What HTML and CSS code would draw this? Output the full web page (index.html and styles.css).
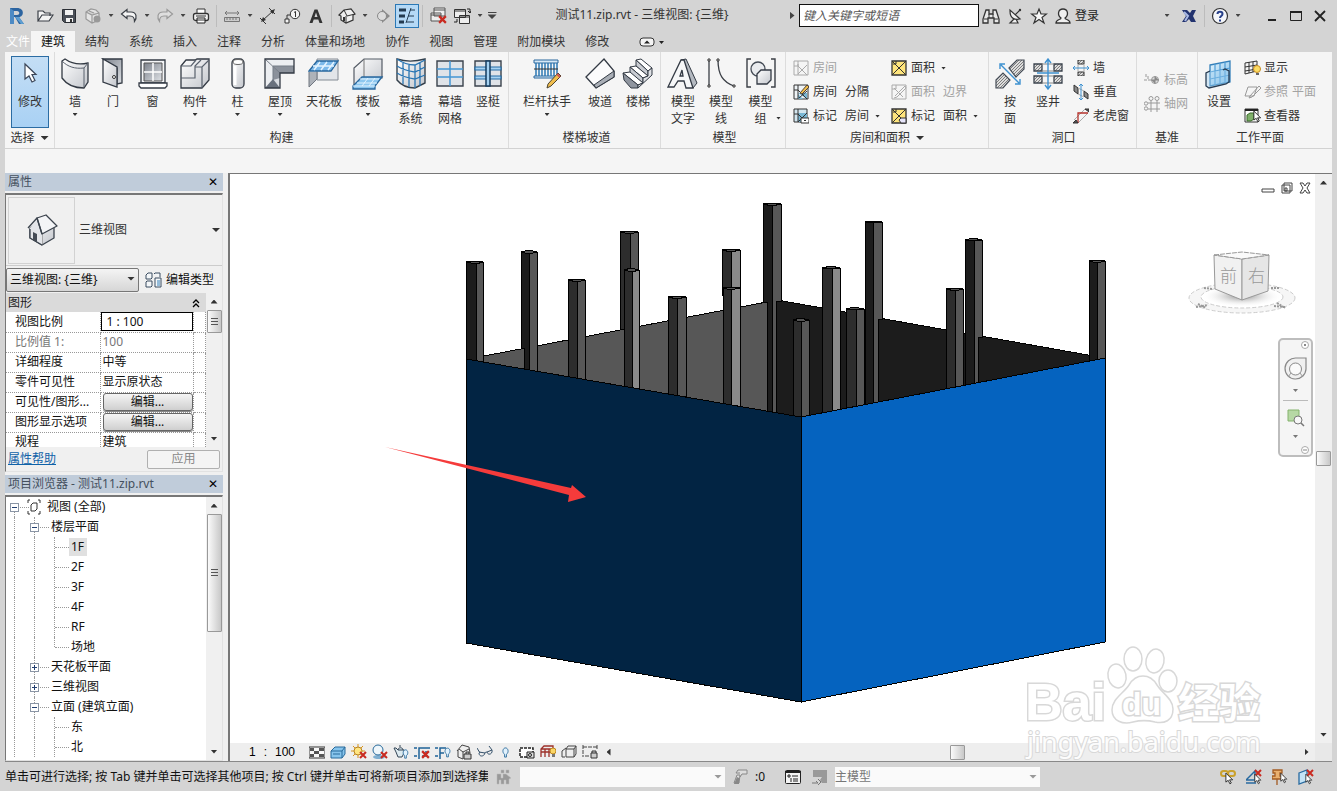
FILE: index.html
```html
<!DOCTYPE html>
<html lang="zh-CN">
<head>
<meta charset="utf-8">
<title>测试11.zip.rvt - 三维视图: {三维}</title>
<link rel="stylesheet" href="styles.css">
</head>
<body>
<svg class="defs" width="0" height="0" aria-hidden="true">
  <defs>
    <linearGradient id="steel" x1="0" y1="0" x2="1" y2="1"><stop offset="0" stop-color="#fff"/><stop offset="1" stop-color="#c3c6cc"/></linearGradient>
    <linearGradient id="dark" x1="0" y1="0" x2="1" y2="1"><stop offset="0" stop-color="#7c828c"/><stop offset="1" stop-color="#dfe2e6"/></linearGradient>
    <linearGradient id="sky" x1="0" y1="0" x2="1" y2="1"><stop offset="0" stop-color="#e4f3fc"/><stop offset="1" stop-color="#7fbfe9"/></linearGradient>
    <radialGradient id="shade"><stop offset="0" stop-color="#888"/><stop offset="1" stop-color="#fff" stop-opacity="0"/></radialGradient>
    <pattern id="hatch" width="3" height="3" patternUnits="userSpaceOnUse"><rect width="3" height="3" fill="#ddd"/><path d="M0 3L3 0" stroke="#666" stroke-width=".8"/></pattern>
    <symbol id="redx" viewBox="0 0 8 8"><path d="M1 1l6 6M7 1L1 7" stroke="#c92a20" stroke-width="2"/></symbol>
    <symbol id="cursor" viewBox="0 0 10 14"><path d="M1 1v10l2.500-2 2 4 1.500-1-2-3.500h3.500z" fill="#fff" stroke="#222"/></symbol>
    <symbol id="bulb" viewBox="0 0 8 12"><path d="M3 8C0 6 1 1 4 1s4 5 1 7v3H3z" fill="#e2f2fd" stroke="#286a9b"/></symbol>
  </defs>
</svg>

<header class="titlebar">
  <div class="quick">
    <button class="ib" aria-label="Revit"><svg width="20" height="20" viewBox="0 0 20 20"><path d="M3 2h7c8 0 7 9 2 9l5 7h-5L8 11H7v7H3z" fill="#2c64a0"/><path d="M7 5h3c3 0 3 4 0 4H7z" fill="#d4d4d4"/><path d="M3 2l4 3v13H3z" fill="#4d8ac4"/><path d="M8 11l4 0 5 7h-3z" fill="#5d9ed2"/></svg></button>
    <span class="gap4"></span>
    <button class="ib" aria-label="打开"><svg width="18" height="16" viewBox="0 0 18 16"><path d="M2 13V3h5l2 2h5v3M2 13l4-6h11l-4 6z" fill="#f4f4f4" stroke="#3a3f46" stroke-width="1.200"/></svg></button>
    <button class="ib" aria-label="保存"><svg width="16" height="16" viewBox="0 0 16 16"><path d="M1.500 1.500h13v13h-11l-2-2z" fill="#4a4f57" stroke="#2a2e34"/><path d="M4 2h8v5H4z" fill="#f2f2f2"/><path d="M5 10h7v4H5z" fill="#f2f2f2"/><path d="M9 11h2v3H9z" fill="#333"/></svg></button>
    <button class="ib" aria-label="同步"><svg width="18" height="16" viewBox="0 0 18 16"><path d="M2 4l5-3 5 1 3 3v7l-7 3-6-4zM2 4l6 3 7-2M8 7v8M5 3l5 2" fill="#e4e4e4" stroke="#999" stroke-width="1.200"/><circle cx="13" cy="11" r="3.500" fill="#999"/></svg></button>
    <button class="ab" aria-label="同步选项"></button>
    <button class="ib" aria-label="撤销"><svg width="18" height="16" viewBox="0 0 18 16"><path d="M1.500 6L7 1.500V4h4c6 0 6 6 3.500 9.500C14.500 9 13 8 10 8H7v2.500z" fill="#f4f4f4" stroke="#3a3f46" stroke-width="1.200"/></svg></button>
    <button class="ab" aria-label="撤销列表"></button>
    <button class="ib" aria-label="重做"><svg width="18" height="16" viewBox="0 0 18 16"><path d="M16.500 6L11 1.500V4H7C1 4 1 10 3.500 13.500 3.500 9 5 8 8 8h3v2.500z" fill="#dedede" stroke="#999" stroke-width="1.200"/></svg></button>
    <button class="ab" aria-label="重做列表"></button>
    <button class="ib" aria-label="打印"><svg width="18" height="16" viewBox="0 0 18 16"><path d="M5 6V1h8v5" fill="#fff" stroke="#333"/><rect x="1.500" y="5.500" width="15" height="7" rx="2" fill="#f2f2f2" stroke="#333" stroke-width="1.300"/><path d="M5 10h8v5H5z" fill="#fff" stroke="#222"/><path d="M4 8h10M5 12h8" stroke="#333"/></svg></button>
    <span class="vsep"></span>
    <button class="ib" aria-label="测量"><svg width="18" height="14" viewBox="0 0 18 14"><path d="M2 4h14M4 2L2 4l2 2M14 2l2 2-2 2" stroke="#777" fill="none"/><path d="M1.500 8.500h15v4h-15z" fill="#ccc" stroke="#777"/><path d="M4 9v2M7 9v2M10 9v2M13 9v2" stroke="#777"/></svg></button>
    <button class="ab" aria-label="测量选项"></button>
    <button class="ib" aria-label="对齐尺寸标注"><svg width="18" height="18" viewBox="0 0 18 18"><path d="M4 13L14 4M1 11l6 6M10 1l6 6" stroke="#333" fill="none"/><path d="M2 15l2-5 3 3zM16 2l-5 2 3 3z" fill="#333"/></svg></button>
    <button class="ib" aria-label="按类别标记"><svg width="18" height="16" viewBox="0 0 18 16"><circle cx="12" cy="6" r="4.700" fill="#f4f4f4" stroke="#333"/><path d="M11 4.500l1.500-1V9M7 7H4v5" stroke="#333" fill="none"/><path d="M2 11h4v4H2z" fill="#f4f4f4" stroke="#333"/></svg></button>
    <button class="ib" aria-label="文字"><svg width="16" height="16" viewBox="0 0 16 16"><path d="M1.500 15L6.500 1.500h3L14.500 15h-3l-1.200-3.500H5.700L4.500 15zM6.500 9h3L8 4.500z" fill="#333" fill-rule="evenodd"/></svg></button>
    <span class="vsep"></span>
    <button class="ib" aria-label="默认三维视图"><svg width="18" height="16" viewBox="0 0 18 16"><path d="M1 7l5-5 7-1 4 5-2 1v5l-7 3-5-3V8z" fill="#f0f0f0" stroke="#333" stroke-width="1.200"/><path d="M6 2l3 6 8-2M8 8v7" fill="none" stroke="#333"/><path d="M5 9h2v4H5z" fill="#333"/></svg></button>
    <button class="ab" aria-label="三维视图选项"></button>
    <button class="ib" aria-label="剖面"><svg width="14" height="16" viewBox="0 0 14 16"><path d="M6 1l8 7-8 7z" fill="#8b8b8b"/><circle cx="6" cy="8" r="4.500" fill="#dcdcdc" stroke="#888"/></svg></button>
    <button class="ib on" aria-label="细线" aria-pressed="true"><svg width="20" height="18" viewBox="0 0 20 18"><path d="M2 3h7M3 3h5" stroke="#233a50" stroke-width="3"/><path d="M2 9h6" stroke="#233a50" stroke-width="3"/><path d="M2 15h5" stroke="#233a50" stroke-width="3"/><path d="M13 3h5M11 9h6M10 15h7M14 1L9 16" stroke="#233a50"/></svg></button>
    <span class="vsep"></span>
    <button class="ib" aria-label="关闭隐藏窗口"><svg width="18" height="18" viewBox="0 0 18 18"><path d="M5 1h11v8H5zM2 6h10v8H2zM2 8h10M5 3h11" fill="#eee" stroke="#555"/><use href="#redx" x="9" y="8" width="9" height="9"/></svg></button>
    <button class="ib" aria-label="切换窗口"><svg width="18" height="18" viewBox="0 0 18 18"><path d="M1.500 2.500h11v8h-11zM1 4h11M6.500 8.500h10v8h-10zM7 10h9" fill="#eee" stroke="#333"/><path d="M14 2h3v4M15 4l2 2 1-2M4 12v3h-3" fill="none" stroke="#222"/></svg></button>
    <button class="ab" aria-label="窗口列表"></button>
    <button class="ab custom" aria-label="自定义快速访问工具栏"></button>
  </div>
  <h1 class="doc">测试11.zip.rvt - 三维视图: {三维}</h1>
  <button class="ab right" aria-label="展开搜索"></button>
  <input class="search" type="text" placeholder="键入关键字或短语" aria-label="搜索">
  <button class="ib" aria-label="查找"><svg width="18" height="18" viewBox="0 0 18 18"><path d="M4 3h3v4h4V3h3l3 9v4h-5v-5H6v5H1v-4z" fill="#e8e8e8" stroke="#333" stroke-width="1.300"/><path d="M2 12h4M12 12h4M7 7v4M11 7v4" stroke="#333" fill="none"/></svg></button>
  <button class="ib" aria-label="通讯中心"><svg width="16" height="18" viewBox="0 0 16 18"><path d="M3 4c0 8 5 9 10 8L3 3zM8 8l5-5M7 12l-4 4h8l-2-4" fill="#f0f0f0" stroke="#333" stroke-width="1.200"/><circle cx="13" cy="3" r="1.200" fill="#333"/></svg></button>
  <button class="ib" aria-label="收藏夹"><svg width="18" height="18" viewBox="0 0 18 18"><path d="M9 2l2 5h5.500L12 10.500l2 5.500-5-3.500L4 16l2-5.500L1.500 7H7z" fill="#f8f8f8" stroke="#333" stroke-width="1.200"/></svg></button>
  <button class="login"><svg width="18" height="18" viewBox="0 0 18 18"><path d="M2 16c0-4 5-3 5-5-4-3-3-9 2-9s6 6 2 9c0 2 5 1 5 5z" fill="#f0f0f0" stroke="#333" stroke-width="1.300"/></svg>登录</button>
  <button class="ab account" aria-label="账户菜单"></button>
  <button class="ib" aria-label="Exchange"><svg width="16" height="16" viewBox="0 0 16 16"><path d="M1 2h5l3 3 2-3h4l-3 6 3 6h-5l-2-3-3 3H1l4-6z" fill="#23336f"/><path d="M3 4l4 4-3 5" stroke="#a9b9e4" stroke-width="2" fill="none"/></svg></button>
  <span class="vsep"></span>
  <button class="ib" aria-label="帮助"><svg width="18" height="18" viewBox="0 0 18 18"><circle cx="9" cy="9" r="7.500" fill="#f4f6fa" stroke="#333" stroke-width="1.200"/><path d="M6.500 7c0-3 5-3 5 0 0 2-2.500 2-2.500 4M9 12.500v2" stroke="#27408a" stroke-width="2" fill="none"/></svg></button>
  <button class="ab" aria-label="帮助菜单"></button>
  <div class="winbtns">
    <button class="ib" aria-label="最小化"><svg width="14" height="14" viewBox="0 0 14 14"><path d="M3 11h8" stroke="#222" stroke-width="2"/></svg></button>
    <button class="ib" aria-label="最大化"><svg width="14" height="14" viewBox="0 0 14 14"><path d="M1.500 2.500h11v9h-11z" stroke="#222" fill="none"/><path d="M1 3h12" stroke="#222" stroke-width="2"/></svg></button>
    <button class="ib" aria-label="关闭"><svg width="14" height="14" viewBox="0 0 14 14"><path d="M2 2l10 10M12 2L2 12" stroke="#222" stroke-width="1.800"/></svg></button>
  </div>
</header>

<nav class="tabs">
  <button class="file">文件</button><button class="active">建筑</button><button>结构</button><button>系统</button><button>插入</button><button>注释</button><button>分析</button><button>体量和场地</button><button>协作</button><button>视图</button><button>管理</button><button>附加模块</button><button>修改</button>
  <button class="mini" aria-label="最小化功能区"><svg width="26" height="10" viewBox="0 0 26 10"><rect x="1" y="1" width="14" height="8" rx="3" fill="#f4f4f4" stroke="#333"/><path d="M5 6.500L8 3.500l3 3zM20 4h5l-2.500 3z" fill="#222"/></svg></button>
</nav>

<section class="ribbon">
  <div class="grp g-select">
    <div class="tools">
      <button class="tool sel"><svg width="32" height="32" viewBox="0 0 32 32"><path d="M11 6v15l4-3 3 6 3-1.500-3-6h4z" fill="#fff" stroke="#3b4658" stroke-width="1.200"/></svg><span>修改</span></button>
    </div>
    <h2>选择 <i class="tri"></i></h2>
  </div>

  <div class="grp g-build">
    <div class="tools">
      <button class="tool s"><svg width="32" height="32" viewBox="0 0 32 32"><path d="M3 3l3-2c7 5 14 6 23 4v19l-4 6C15 30 8 27 3 20z" fill="url(#steel)" stroke="#333a44" stroke-width="1.300"/><path d="M3 3c6 6 13 8 22 7l4-5M25 10v19" fill="none" stroke="#59616d"/></svg><span>墙</span><i class="tri"></i></button>
      <button class="tool s"><svg width="32" height="32" viewBox="0 0 32 32"><path d="M6 1h19v24l-5 1V10z" fill="url(#dark)" stroke="#333a44" stroke-width="1.300"/><path d="M6 1l14 8v20L6 24z" fill="url(#steel)" stroke="#333a44" stroke-width="1.300"/><circle cx="17" cy="19" r="1.500" fill="#fff" stroke="#333"/></svg><span>门</span></button>
      <button class="tool m"><svg width="32" height="32" viewBox="0 0 32 32"><path d="M4 2h24v23H4z" fill="#f4f5f7" stroke="#333a44" stroke-width="1.300"/><path d="M7 5h18v18H7z" fill="url(#dark)" stroke="#555"/><path d="M16 5v18M7 14h18" stroke="#fff" stroke-width="1.500"/><path d="M2 25h28v3l-2 2H4l-2-2z" fill="#fff" stroke="#333a44" stroke-width="1.300"/></svg><span>窗</span></button>
      <button class="tool l"><svg width="32" height="32" viewBox="0 0 32 32"><path d="M2 8l5-6h9l2-1h12v21l-7 8H2z" fill="url(#steel)" stroke="#333a44" stroke-width="1.300"/><path d="M2 20h14V8l6-6M2 8h10l5-6M16 9h7l7-7M23 9v21" fill="none" stroke="#59616d" stroke-width="1.200"/></svg><span>构件</span><i class="tri"></i></button>
      <button class="tool m"><svg width="32" height="32" viewBox="0 0 32 32"><rect x="10" y="1" width="12" height="29" rx="4" fill="url(#steel)" stroke="#333a44" stroke-width="1.300"/><ellipse cx="16" cy="4" rx="5" ry="2.500" fill="#fff" stroke="#666"/><path d="M13 8v19" stroke="#fff" stroke-width="3"/></svg><span>柱</span><i class="tri"></i></button>
      <button class="tool l"><svg width="32" height="32" viewBox="0 0 32 32"><path d="M1 1h29v14H16v15H1z" fill="#d9dce1"/><path d="M1 1l8 7v14l-8 8zM1 1h29v7H9z" fill="#eceef1"/><path d="M9 8h21v7H16v5l-7 2z" fill="#8b919b"/><path d="M1 30l8-9 7 9z" fill="#69717d"/><path d="M1 1l15 14M9 8v14M9 8h21" stroke="#777e88" fill="none"/><path d="M1 1h29v14H16v15H1z" fill="none" stroke="#333a44" stroke-width="1.300"/></svg><span>屋顶</span><i class="tri"></i></button>
      <button class="tool l"><svg width="32" height="32" viewBox="0 0 32 32"><path d="M1 13h29v9H9l-8 8z" fill="#eceef1"/><path d="M9 1h21v21H9z" fill="#e2e5e9" stroke="#848b94"/><path d="M1 13l8-10h21l-7 10z" fill="#7cb9ea" stroke="#28679d" stroke-width="1.300"/><path d="M12 4l-6 8M19 4l-6 8M26 4l-6 8M5 8h21" stroke="#e4f4ff" stroke-width="1.500"/><path d="M1 14v15l8-8v-7" fill="#adb2b9" stroke="#717780"/></svg><span>天花板</span></button>
      <button class="tool l"><svg width="32" height="32" viewBox="0 0 32 32"><path d="M2 10l10-9h18v19H10l-8 8z" fill="url(#steel)" stroke="#555c66" stroke-width="1.200"/><path d="M12 1v18" stroke="#777"/><path d="M1 28l9-9h20l-7 9v3H1z" fill="#8dc7ef" stroke="#28679d" stroke-width="1.300"/><path d="M8 21h19M5 25h20M16 20l-6 8M23 20l-6 8M1 28h22" stroke="#e4f4ff"/></svg><span>楼板</span><i class="tri"></i></button>
      <button class="tool m"><svg width="32" height="32" viewBox="0 0 32 32"><path d="M2 1c9 3 17 3 28 0v24l-10 5C12 30 6 27 2 22z" fill="url(#steel)" stroke="#34404c" stroke-width="1.400"/><path d="M2 1c7 5 12 6 18 6l10-5M20 7v23M8 5v21M14 7v22M25 5v23M2 8c8 5 12 5 18 6l10-5M2 15c8 5 12 5 18 6l10-4" fill="none" stroke="#2875b3" stroke-width="1.300"/></svg><span>幕墙<br>系统</span></button>
      <button class="tool s"><svg width="32" height="32" viewBox="0 0 32 32"><path d="M3 3h26v25H3z" fill="#dfe3e8" stroke="#3b434d" stroke-width="1.400"/><path d="M3 11h26M3 19h26M16 3v25" stroke="#4496d4" stroke-width="1.500"/></svg><span>幕墙<br>网格</span></button>
      <button class="tool s"><svg width="32" height="32" viewBox="0 0 32 32"><path d="M3 3h26v25H3z" fill="#dfe3e8" stroke="#3b434d" stroke-width="1.400"/><path d="M3 9h26v3H3zM3 18h26v3H3z" fill="#a6d2f2" stroke="#246ca5" stroke-width="1.200"/><path d="M14 3h4v25h-4z" fill="#a6d2f2" stroke="#153c5f" stroke-width="1.500"/></svg><span>竖梃</span></button>
    </div>
    <h2>构建</h2>
  </div>

  <div class="grp g-stair">
    <div class="tools">
      <button class="tool xl"><svg width="32" height="32" viewBox="0 0 32 32"><path d="M3 2h24v3H3zM3 18h24v2H3z" fill="#d7e9f7" stroke="#28679d"/><path d="M5 5v13M8 5v13M11 5v13M14 5v13M17 5v13M20 5v13M23 5v13M26 5v13" stroke="#2c78b4" stroke-width="1.500"/><path d="M3 11h24" stroke="#333"/><path d="M17 26L27 15l3 3-10 10-4 2z" fill="#f0bd4c" stroke="#4c4430"/><path d="M26 16l3 3" stroke="#c55" stroke-width="2"/></svg><span>栏杆扶手</span><i class="tri"></i></button>
      <button class="tool s"><svg width="32" height="32" viewBox="0 0 32 32"><path d="M2 19L20 1l10 12v6L12 30z" fill="#fbfbfc" stroke="#333a44" stroke-width="1.300"/><path d="M12 30l-2-3 20-14v6z" fill="#a9aeb6" stroke="#333a44"/></svg><span>坡道</span></button>
      <button class="tool s"><svg width="32" height="32" viewBox="0 0 32 32"><g stroke="#333a44" stroke-linejoin="round"><path d="M14 2l5-1 11 9-4 3z" fill="#fff"/><path d="M14 2l12 11v5L14 8z" fill="#c9ccd2"/><path d="M8 9l6-1 12 10-5 2z" fill="#fff"/><path d="M8 9l13 11v5L8 15z" fill="#c9ccd2"/><path d="M1 15l7-1 13 11-5 2z" fill="#fff"/><path d="M1 15l15 12v3H9l-7-8z" fill="#8f959f"/><path d="M16 30l14-13v-7l-4 3v5l-5 2v5l-5 2z" fill="#dfe1e5"/></g></svg><span>楼梯</span></button>
    </div>
    <h2>楼梯坡道</h2>
  </div>

  <div class="grp g-model">
    <div class="tools">
      <button class="tool s"><svg width="32" height="32" viewBox="0 0 32 32"><path d="M14 2l5-1 11 24-4 5z" fill="#b4b9c0" stroke="#333a44"/><path d="M1 29L14 2h3l9 28h-7l-2-7h-6l-4 6zM13 18h3l-1-6z" fill="#f6f7f8" fill-rule="evenodd" stroke="#333a44" stroke-width="1.300"/></svg><span>模型<br>文字</span></button>
      <button class="tool s"><svg width="32" height="32" viewBox="0 0 32 32"><path d="M4 2v26M13 2c0 15 5 22 16 26" fill="none" stroke="#3b3f46" stroke-width="1.300"/><path d="M3 1h2v2H3zM3 27h2v2H3zM12 1h2v2h-2zM28 27h2v2h-2z" fill="#fff" stroke="#333"/></svg><span>模型<br>线</span></button>
      <button class="tool m side"><svg width="32" height="32" viewBox="0 0 32 32"><path d="M6 1H2v28h4M26 1h4v28h-4" fill="none" stroke="#3b3f46" stroke-width="1.400"/><circle cx="13" cy="11" r="7" fill="#e9ebee" stroke="#444b55" stroke-width="1.300"/><path d="M12 16l4-4h10v10l-4 4H12z" fill="url(#steel)" stroke="#333a44" stroke-width="1.300"/></svg><span>模型<br>组</span><i class="tri"></i></button>
    </div>
    <h2>模型</h2>
  </div>

  <div class="grp g-room">
    <div class="tools">
      <div class="stack">
        <button disabled><svg width="16" height="16" viewBox="0 0 16 16"><path d="M1 1h14v14H1zM1 6h4V1M5 6l9 9M14 5l-9 9M5 4v11" fill="none" stroke="#aaa"/></svg><span>房间</span></button>
        <button><svg width="16" height="16" viewBox="0 0 16 16"><path d="M1 1h14v14H1z" fill="#eef3f6" stroke="#333"/><path d="M5 10l5 5H5zM5 9h9v6" fill="#79b7d4"/><path d="M1 6h4V1M5 6v9M6 14l8-7M5 6l9 9" stroke="#333" fill="none"/><path d="M7 9l7-8 2 2-7 7z" fill="#f0bd4c" stroke="#543"/></svg><span>房间</span><span>分隔</span></button>
        <button><svg width="16" height="16" viewBox="0 0 16 16"><path d="M1 1h13v13H1z" fill="#d3e6ef" stroke="#333"/><path d="M5 5h9v9H5z" fill="#79b7d4"/><path d="M1 6h4V1M5 6v8M5 6l8 8M14 5l-9 9" stroke="#333" fill="none"/><path d="M8 10h8v5H8z" fill="#fff" stroke="#333"/><path d="M11 12h2v1h-2z" fill="#333"/></svg><span>标记</span><span>房间</span><i class="tri"></i></button>
      </div>
      <div class="stack">
        <button><svg width="16" height="16" viewBox="0 0 16 16"><path d="M1 1h14v14H1z" fill="#ffe57c" stroke="#333" stroke-width="1.300"/><path d="M1 1l14 14M15 1L1 15M2 4h3V1" stroke="#333" fill="none"/></svg><span>面积</span><i class="tri"></i></button>
        <button disabled><svg width="16" height="16" viewBox="0 0 16 16"><path d="M1 1h14v14H1zM1 5h4V1M4 12L14 2l1 2L6 13l-3 1M3 4l9 9" fill="none" stroke="#aaa"/></svg><span>面积</span><span>边界</span></button>
        <button><svg width="16" height="16" viewBox="0 0 16 16"><path d="M1 1h14v14H1z" fill="#ffe57c" stroke="#333" stroke-width="1.300"/><path d="M1 1l14 14M15 1L1 15M2 4h3V1" stroke="#333" fill="none"/><path d="M8 12l2-2h5v5h-5z" fill="#e7e5fa" stroke="#333"/></svg><span>标记</span><span>面积</span><i class="tri"></i></button>
      </div>
    </div>
    <h2>房间和面积 <i class="tri"></i></h2>
  </div>

  <div class="grp g-open">
    <div class="tools">
      <button class="tool s"><svg width="32" height="32" viewBox="0 0 32 32"><path d="M15 10l8-8h7v9l-8 8zM2 22l7-7 7 7-7 8H2z" fill="url(#hatch)" stroke="#444b55" stroke-width="1.200"/><path d="M7 7l18 18M6 11V6h5M21 26h5v-5" stroke="#3e91d0" stroke-width="1.400" fill="none"/></svg><span>按<br>面</span></button>
      <button class="tool s"><svg width="32" height="32" viewBox="0 0 32 32"><path d="M2 6h8v7H2zM22 6h8v7h-8zM2 18h8v7H2zM22 18h8v7h-8z" fill="url(#hatch)" stroke="#3b434d" stroke-width="1.300"/><path d="M10 6h12M10 13h12M10 18h12M10 25h12" stroke="#888"/><path d="M16 2v28M13 5l3-4 3 4M13 27l3 4 3-4M5 15h22" stroke="#3e91d0" stroke-width="1.400" fill="none"/></svg><span>竖井</span></button>
      <div class="stack">
        <button><svg width="16" height="16" viewBox="0 0 16 16"><path d="M5 0h6v4H5zM5 12h6v4H5z" fill="url(#hatch)" stroke="#333"/><path d="M5 4v8M11 4v8" stroke="#aaa"/><path d="M0 8h16M2 6L0 8l2 2M14 6l2 2-2 2" stroke="#3e91d0" fill="none"/></svg><span>墙</span></button>
        <button><svg width="16" height="16" viewBox="0 0 16 16"><path d="M1 1l4 3v6L1 7zM11 7l4 3v5l-4-3z" fill="#888" stroke="#333"/><path d="M5 4l6 3M5 10l6 3" stroke="#aaa"/><path d="M8 0v16M6 2l2-2 2 2M6 14l2 2 2-2" stroke="#3e91d0" fill="none"/></svg><span>垂直</span></button>
        <button><svg width="16" height="16" viewBox="0 0 16 16"><path d="M1 12L12 1M5 15L15 5" fill="none" stroke="#aaa"/><path d="M5 15V5h10" fill="none" stroke="#b5322b" stroke-width="1.300"/><path d="M0 15l3-3 2 3zM12 1h4v3z" fill="#555" stroke="#333"/></svg><span>老虎窗</span></button>
      </div>
    </div>
    <h2>洞口</h2>
  </div>

  <div class="grp g-datum">
    <div class="tools">
      <div class="stack mid">
        <button disabled><svg width="16" height="16" viewBox="0 0 16 16"><path d="M0 8h16M2 2v4M4 4v3" stroke="#999" stroke-dasharray="3 1"/><circle cx="11" cy="8" r="3.500" fill="#ddd" stroke="#999"/><path d="M11 4.500V8h3.500M11 11.500V8H7.500" fill="#888" stroke="#888"/></svg><span>标高</span></button>
        <button disabled><svg width="16" height="16" viewBox="0 0 16 16"><g fill="none" stroke="#999"><circle cx="7" cy="2.500" r="2"/><circle cx="13" cy="2.500" r="2"/><circle cx="2" cy="7.500" r="1.700"/><circle cx="2" cy="12.500" r="1.700"/><path d="M7 5v11M13 5v11M4 7h12M4 13h12"/></g></svg><span>轴网</span></button>
      </div>
    </div>
    <h2>基准</h2>
  </div>

  <div class="grp g-plane">
    <div class="tools">
      <button class="tool s"><svg width="32" height="32" viewBox="0 0 32 32"><path d="M7 7l20-4v21L7 28z" fill="url(#sky)" stroke="#3580ba" stroke-width="1.300"/><path d="M12 6v21M17 5v21M22 4v21M7 14l20-4M7 21l20-4" stroke="#4c9bd5" stroke-width="1.200"/><path d="M7 13l-4 2v13l3 2 17-4 3-2V13l-4-2-2 1" fill="#9fd0f0" fill-opacity=".4" stroke="#273b51" stroke-width="1.300"/></svg><span>设置</span></button>
      <div class="stack">
        <button><svg width="18" height="16" viewBox="0 0 18 16"><path d="M1 3l12-2v10L1 14zM5 2v11M9 2v10M1 7l12-2M1 11l12-2" fill="none" stroke="#333"/><circle cx="13" cy="9" r="3.500" fill="#fbdc63" stroke="#c78b21"/><path d="M12 13h3v2h-3z" fill="#666"/></svg><span>显示</span></button>
        <button disabled><svg width="18" height="16" viewBox="0 0 18 16"><path d="M4 3h9l-3 9H1zM6 12l9-10 2 2-9 9-3 1z" fill="none" stroke="#999"/></svg><span>参照</span><span>平面</span></button>
        <button><svg width="18" height="16" viewBox="0 0 18 16"><path d="M1 1h13v13H1z" fill="#fff" stroke="#333"/><path d="M1 2h13" stroke="#222" stroke-width="2"/><path d="M3 7l3-2h4v6l-3 2H3z" fill="#7fb06a" stroke="#3b6b2b"/><use href="#cursor" x="9" y="2" width="9" height="13"/></svg><span>查看器</span></button>
      </div>
    </div>
    <h2>工作平面</h2>
  </div>
</section>
<div class="options"></div>

<main class="work">
  <aside class="docks">
    <section class="dock props">
      <header><h3>属性</h3><button aria-label="关闭属性">✕</button></header>
      <div class="frame">
        <div class="type">
          <div class="thumb-box"><svg width="32" height="32" viewBox="0 0 32 32"><path d="M4 14v10l12 7 12-7V12L17 5z" fill="url(#steel)" stroke="#3b434d" stroke-width="1.300"/><path d="M16 20v11" stroke="#777"/><path d="M4 14L11 5l5 14v12L4 24z" fill="#e3e5e9"/><path d="M11 4l9-3 11 11-15 8z" fill="#f4f5f7" stroke="#3b434d" stroke-width="1.300" stroke-linejoin="round"/><path d="M2 14L11 4l5 16" fill="none" stroke="#3b434d" stroke-width="1.300" stroke-linejoin="round"/><path d="M4 15v9l12 7" fill="none" stroke="#3b434d" stroke-width="1.300"/><path d="M7 18l4 2v8l-4-2z" fill="#444b55"/></svg></div>
          <span>三维视图</span><i class="tri"></i>
        </div>
        <div class="pick">
          <div class="combo xp"><select aria-label="视图"><option>三维视图: {三维}</option></select><i class="tri"></i></div>
          <button class="edit-type"><svg width="18" height="16" viewBox="0 0 18 16"><path d="M1 3l2-2h4v5L6 7H1zM9 2l1-1h5v4M1 10l1-1h5v5l-1 1H1zM10 6h6v9h-6z" fill="#f4f7f9" stroke="#3a4d60"/><path d="M12 9h3M12 11h3M12 13h3" stroke="#3580ba"/></svg>编辑类型</button>
        </div>
        <div class="scroller">
          <div class="grid">
            <h4>图形<svg width="8" height="10" viewBox="0 0 8 10"><path d="M1 5l3-3 3 3M1 9l3-3 3 3" fill="none" stroke="#000" stroke-width="1.300"/></svg></h4>
            <table>
              <tr><th>视图比例</th><td><input type="text" value="1 : 100" aria-label="视图比例"></td><td></td></tr>
              <tr class="off"><th>比例值 1:</th><td>100</td><td></td></tr>
              <tr><th>详细程度</th><td>中等</td><td></td></tr>
              <tr><th>零件可见性</th><td>显示原状态</td><td></td></tr>
              <tr><th>可见性/图形...</th><td><button>编辑...</button></td><td></td></tr>
              <tr><th>图形显示选项</th><td><button>编辑...</button></td><td></td></tr>
              <tr><th>规程</th><td>建筑</td><td></td></tr>
            </table>
          </div>
          <div class="vscroll"><i class="up"></i><b class="t-small"></b><i class="down"></i></div>
        </div>
        <footer><a href="#help">属性帮助</a><button disabled>应用</button></footer>
      </div>
    </section>

    <section class="dock browser">
      <header><h3>项目浏览器 - 测试11.zip.rvt</h3><button aria-label="关闭项目浏览器">✕</button></header>
      <div class="frame scroller">
        <ul class="tree">
          <li><i class="c first"><button aria-label="折叠"></button></i><svg width="16" height="16" viewBox="0 0 16 16"><path d="M4 1H2v3M12 1h2v3M4 15H2v-3M12 15h2v-3M5 6l2-2h4v6l-2 2H5z" fill="none" stroke="#333"/></svg><span>视图 (全部)</span></li>
          <li><i class="c"></i><i class="c"><button aria-label="折叠"></button></i><span>楼层平面</span></li>
          <li><i class="c"></i><i class="c"></i><i class="c h"></i><span class="cur">1F</span></li>
          <li><i class="c"></i><i class="c"></i><i class="c h"></i><span>2F</span></li>
          <li><i class="c"></i><i class="c"></i><i class="c h"></i><span>3F</span></li>
          <li><i class="c"></i><i class="c"></i><i class="c h"></i><span>4F</span></li>
          <li><i class="c"></i><i class="c"></i><i class="c h"></i><span>RF</span></li>
          <li><i class="c"></i><i class="c"></i><i class="c h last"></i><span>场地</span></li>
          <li><i class="c"></i><i class="c"><button class="plus" aria-label="展开"></button></i><span>天花板平面</span></li>
          <li><i class="c"></i><i class="c"><button class="plus" aria-label="展开"></button></i><span>三维视图</span></li>
          <li><i class="c"></i><i class="c"><button aria-label="折叠"></button></i><span>立面 (建筑立面)</span></li>
          <li><i class="c"></i><i class="c"></i><i class="c h"></i><span>东</span></li>
          <li><i class="c"></i><i class="c"></i><i class="c h"></i><span>北</span></li>
        </ul>
        <div class="vscroll"><i class="up"></i><b class="t-tall"></b><i class="down"></i></div>
      </div>
    </section>
  </aside>

  <section class="view">
    <div class="canvas">
      <svg class="scene" viewBox="230 174 1085 569" role="img" aria-label="三维视图">
        <g shape-rendering="crispEdges" stroke="#000" stroke-width="1">
          <path d="M466 359L484 356 772 301V412z" fill="#575757"/>
          <path d="M777 300L1105 358 801 417 772 412V301z" fill="#1c1c1c"/>
          <g fill="#1c1c1c"><path d="M466 262h10v100h-10zM521 252h8v120h-5v-24h-3zM763 204h9v208h-5V302h-4zM865 222h8v182h-8zM965 240h9v145h-9zM1089 261h8v100h-8z"/></g>
          <g fill="#2d2d2d"><path d="M568 280h9v99h-9zM620 232h10v97h-10zM668 297h9v101h-9zM722 250h9v45h-9zM846 309h10v98h-10zM946 289h9v100h-9zM822 268h10v146h-10z"/></g>
          <g fill="#575757"><path d="M476 262h7v100h-7zM529 252h8v120h-8zM577 280h8v99h-8zM630 232h8v40h-8zM677 297h9v103h-9zM772 204h9v97h-5v111h-4zM856 309h8v98h-8zM873 222h9v97h-4v85h-5zM955 289h8v100h-8zM974 240h8v97h-4v47h-4zM1097 261h8v100h-8z"/></g>
          <g fill="#8a8a8a"><path d="M731 250h9v40h-9zM832 268h8v145h-8z"/></g>
          <path d="M624 270h8v122h-8zM723 288h8v120h-8zM793 320h8v98h-8z" fill="#2d2d2d"/>
          <path d="M632 270h7v122h-7zM731 288h9v120h-9z" fill="#8a8a8a"/><path d="M801 320h8v98h-8z" fill="#575757"/>
          <path d="M466 262l9-1 8 1-7 2zM521 252l8-2 8 2-8 2zM568 280l8-1 9 1-8 2zM620 232l9-1 9 1-8 2zM624 270l7-2 8 2-7 2zM668 297l8-1 10 1-9 2zM722 250l9-1 9 1-9 2zM723 288l8-1 9 1-9 2zM763 204l9-1 9 1-9 2zM793 320l7-2 9 2-8 2zM822 268l9-2 9 2-8 1zM846 309l8-2 10 2-8 1zM865 222l8-1 9 1-9 1zM946 289l8-1 9 1-8 2zM965 240l8-2 9 2-8 1zM1089 261l8-1 8 1-8 2z" fill="#555"/>
          <path d="M466 359l335 58v285l-335-59z" fill="#022443"/>
          <path d="M801 417l304-59v284l-304 60z" fill="#0563bf"/>
        </g>
        <path d="M385 447L571 488 572 485 586 497 568 502 569 495z" fill="#f53b3b"/>
        <g>
          <ellipse cx="1242" cy="298" rx="53" ry="15" fill="#f6f6f6" stroke="#ccc" stroke-dasharray="4 2"/>
          <ellipse cx="1242" cy="297" rx="41" ry="11" fill="#fff" stroke="#ccc" stroke-dasharray="4 2"/>
          <ellipse cx="1242" cy="296" rx="40" ry="11" fill="url(#shade)"/>
          <path d="M1196 307l12-2M1198 304l8 4M1274 306l12 1M1277 303l8 5M1204 288l9 1M1271 288l8 0" stroke="#999" stroke-dasharray="2 1" stroke-width="2"/>
          <path d="M1214 255l28 4v41l-27-11z" fill="#f1f1f1" stroke="#999"/>
          <path d="M1242 259l27-4-1 36-26 9z" fill="#e6e6e6" stroke="#999"/>
          <path d="M1214 255l28-3 27 3-27 4z" fill="#fafafa" stroke="#999" stroke-dasharray="5 1"/>
          <text x="1220" y="282" class="cube">前</text><text x="1248" y="282" class="cube">右</text>
        </g>
      </svg>
      <div class="mdi">
        <button aria-label="最小化视图"><svg width="14" height="12" viewBox="0 0 14 12"><path d="M1 7h12v3H1z" fill="#fff" stroke="#444"/></svg></button>
        <button aria-label="还原视图"><svg width="12" height="12" viewBox="0 0 12 12"><path d="M3 1h8v8H3zM1 3h8v8H1zM4 6h2v3H4z" fill="#fff" stroke="#444"/></svg></button>
        <button aria-label="关闭视图"><svg width="12" height="12" viewBox="0 0 12 12"><path d="M1 1h3l2 3 2-3h3L8 6l3 5H8L6 8l-2 3H1l3-5z" fill="#fff" stroke="#444"/></svg></button>
      </div>
      <div class="navbar">
        <button class="tiny" aria-label="关闭导航栏"><svg width="8" height="8" viewBox="0 0 8 8"><circle cx="4" cy="4" r="3.500" fill="#fff" stroke="#aaa"/><path d="M3 3l2 2M5 3L3 5" stroke="#888"/></svg></button>
        <button aria-label="控制盘"><svg width="24" height="24" viewBox="0 0 24 24"><path d="M12 1h10v11a10.500 10.500 0 1 1-10-11z" fill="#f0f0f0" stroke="#888" stroke-width="1.200"/><circle cx="11.500" cy="12" r="6" fill="#fafafa" stroke="#888"/><path d="M4 20l3-4M19 20l-3-4" stroke="#999"/></svg></button>
        <i class="tri"></i><hr>
        <button aria-label="区域放大"><svg width="18" height="18" viewBox="0 0 18 18"><path d="M1 1h11v11H1z" fill="#b6d8a4" stroke="#84b26c"/><circle cx="11" cy="11" r="4" fill="#f7f7f7" stroke="#777"/><path d="M14 14l3 3" stroke="#777" stroke-width="1.500"/></svg></button>
        <i class="tri"></i>
        <button class="tiny" aria-label="导航栏选项"><svg width="8" height="8" viewBox="0 0 8 8"><circle cx="4" cy="4" r="3.500" fill="#fff" stroke="#aaa"/><path d="M2 4h4" stroke="#888"/></svg></button>
      </div>
    </div>
    <div class="vscroll side-scroll"><i class="up"></i><s></s><b class="t-sq"></b><s></s><i class="down"></i></div>
    <div class="viewbar">
      <button class="scale"><span>1</span><span>:</span><span>100</span></button>
      <button aria-label="详细程度"><svg viewBox="0 0 16 16"><path d="M0 3h16v11H0z" fill="#f8f8f8" stroke="#333"/><path d="M1 4h4v3H1zM10 4h5v3h-5zM5 7h5v3H5zM1 10h4v3H1zM10 10h5v3h-5z" fill="#555"/></svg></button>
      <button aria-label="视觉样式"><svg viewBox="0 0 16 16"><path d="M1 7l4-4h10v7l-3 4H1z" fill="#86c4ec" stroke="#286a9b"/><path d="M1 7h11v7M12 7l3-4M3 10h7" fill="none" stroke="#286a9b"/></svg></button>
      <button aria-label="日光路径"><svg viewBox="0 0 16 16"><path d="M7 0v14M0 7h14M2 2l10 10M12 2L2 12" stroke="#d8951f"/><circle cx="7" cy="7" r="4" fill="#ffe681" stroke="#b98322"/><use href="#redx" x="8" y="7" width="8" height="8"/></svg></button>
      <button aria-label="阴影"><svg viewBox="0 0 16 16"><ellipse cx="7" cy="13" rx="6" ry="2" fill="#7faed0"/><circle cx="6" cy="6" r="5" fill="#eef6fb" stroke="#286a9b"/><use href="#redx" x="8" y="7" width="8" height="8"/></svg></button>
      <button aria-label="渲染"><svg viewBox="0 0 16 16"><path d="M1 4h2l2 2h6v3l-2 4H5L3 8zM5 6c0-3 5-3 5 0M7 3V1" fill="#dceaf0" stroke="#345"/><use href="#bulb" x="9" y="5" width="7" height="10"/></svg></button>
      <button aria-label="裁剪视图"><svg viewBox="0 0 16 16"><path d="M5 15V4h11M0 12h3M8 12h4V7M0 4h3" fill="none" stroke="#1f6398" stroke-width="1.500"/><use href="#redx" x="7" y="6" width="9" height="9"/></svg></button>
      <button aria-label="显示裁剪区域"><svg viewBox="0 0 16 16"><path d="M5 15V4h6M0 12h3M5 9h4M0 4h3" fill="none" stroke="#1f6398" stroke-width="1.500"/><use href="#bulb" x="9" y="3" width="7" height="11"/></svg></button>
      <button aria-label="锁定三维视图"><svg viewBox="0 0 16 16"><path d="M1 7l5-6 7 2 1 6M2 6v7l5 2V8l6-3M7 8L3 5" fill="#eee" stroke="#444"/><path d="M8 10h7v5H8zM10 10V8h3v2" fill="#ccc" stroke="#333"/></svg></button>
      <button aria-label="临时隐藏"><svg viewBox="0 0 16 16"><path d="M0 4l3 5M2 9c0 4 5 4 6 0 0-1 2-1 2-1 1 4 6 2 5-2l-3-4M2 8l6 1M10 8l5-2" fill="none" stroke="#34506a"/></svg></button>
      <button aria-label="显示隐藏图元"><svg viewBox="0 0 16 16"><use href="#bulb" x="3" y="3" width="9" height="11"/></svg></button>
      <button aria-label="临时视图属性"><svg viewBox="0 0 16 16"><path d="M1 4h13v9H1z" fill="#fff" stroke="#222" stroke-width="1.500" stroke-dasharray="3 1"/><path d="M8 8h7v6H8z" fill="#ddd" stroke="#222"/><circle cx="11" cy="11" r="1.500" fill="none" stroke="#222"/></svg></button>
      <button aria-label="分析模型"><svg viewBox="0 0 16 16"><path d="M1 13V5l3-3h9v8M1 8h10M5 13V5M9 13V5M1 5h10" fill="none" stroke="#9d302a" stroke-width="1.300"/><circle cx="13" cy="7" r="3" fill="#f9d667" stroke="#bf881e"/><path d="M12 10h3v3h-3z" fill="#777"/></svg></button>
      <button aria-label="置换集"><svg viewBox="0 0 16 16"><path d="M5 5l2-3h8v8l-2 3M5 5h8v8H5zM13 5l2-3M5 4L1 7v6l3 0" fill="#eee" stroke="#444"/></svg></button>
      <button aria-label="约束"><svg viewBox="0 0 16 16"><path d="M1 1v12M15 1v5M1 3h14M3 12h5" stroke="#444" stroke-dasharray="4 1"/><path d="M9 9h6v5H9zM10 9V7h4v2" fill="#ccc" stroke="#333"/></svg></button>
      <div class="hscroll"><i class="left"></i><s></s><b class="t-sq"></b><s></s><i class="rt"></i></div>
    </div>
    <div class="corner"></div>
    <svg class="mark" width="250" height="120" viewBox="1020 644 250 120" aria-label="Baidu经验">
      <g fill="#fff" fill-opacity=".9" stroke="#d8d8d8" stroke-width="1.500">
        <ellipse cx="1117" cy="677" rx="9" ry="12" transform="rotate(-12 1117 677)"/><ellipse cx="1133" cy="660" rx="9" ry="12"/><ellipse cx="1155" cy="662" rx="9" ry="12" transform="rotate(12 1155 662)"/><ellipse cx="1168" cy="682" rx="9" ry="11"/>
        <path d="M1129 686c7-12 21-12 28 0 5 8 16 14 16 24 0 12-9 15-18 13-8-2-14-2-22 0-10 3-21-1-21-12 0-11 11-16 17-25z"/>
      </g>
      <text class="wm" x="1025" y="721" font-size="52">Bai</text>
      <text class="wm" x="1122" y="716" font-size="32">du</text>
      <text class="wm zh" x="1178" y="719" font-size="41">经验</text>
      <text class="wm url" x="1027" y="753" font-size="27">jingyan.baidu.com</text>
    </svg>
  </section>
</main>

<footer class="status">
  <p>单击可进行选择; 按 Tab 键并单击可选择其他项目; 按 Ctrl 键并单击可将新项目添加到选择集</p>
  <svg class="si" viewBox="0 0 16 16"><path d="M1 5h4v4h2V5h3l5 4-2 1v5h-3v-4H8v4H5v-4H3v4H1zM5 1h3v3H5zM10 1h3v3h-3z" fill="#999" stroke="#b8b8b8" stroke-width=".5"/></svg>
  <div class="combo flat"><select disabled aria-label="工作集"><option></option></select><i class="tri"></i></div>
  <svg class="si" viewBox="0 0 16 16"><path d="M5 1h9v4H9L7 8M5 1L3 4h4M1 14l3-8h3l-1 8z" fill="#ddd" stroke="#888"/><path d="M1 15l3-7 2 1v6z" fill="#888"/></svg>
  <span class="count">:0</span>
  <svg class="si" viewBox="0 0 16 16"><rect x=".5" y="1.500" width="15" height="13" rx="1" fill="#f5f5f5" stroke="#222"/><path d="M0 3h16" stroke="#222" stroke-width="2"/><path d="M3 6h2v2H3zM7 7h6M5 10h2M8 10h5M5 12h2M8 12h5" stroke="#222" fill="none"/></svg>
  <svg class="si last-si" viewBox="0 0 16 16"><path d="M2 1h14v13h-5l-2-3 2-3H2z" fill="#999"/><path d="M1 14h6l-2-2M7 10l3 3-3 3" stroke="#777" fill="none"/></svg>
  <div class="combo flat"><select disabled aria-label="设计选项"><option>主模型</option></select><i class="tri"></i></div>
  <div class="selset">
    <button aria-label="选择链接"><svg viewBox="0 0 16 16"><rect x="1" y="2" width="7" height="5" rx="2.500" fill="none" stroke="#caa12c" stroke-width="2"/><rect x="8" y="2" width="7" height="5" rx="2.500" fill="none" stroke="#caa12c" stroke-width="2"/><use href="#cursor" x="5" y="3" width="9" height="13"/></svg></button>
    <button aria-label="选择基线图元"><svg viewBox="0 0 16 16"><path d="M0 11L9 2v9zM0 14h10" fill="none" stroke="#286aa0" stroke-width="1.500"/><use href="#redx" x="8" y="0" width="8" height="8"/><use href="#cursor" x="8" y="4" width="8" height="12"/></svg></button>
    <button aria-label="选择锁定图元"><svg viewBox="0 0 16 16"><path d="M1 1h9v3H8v3h3v3H0V7h3V4H1zM5 10v6" fill="#e9b06f" stroke="#a35b22" stroke-width="1.300"/><use href="#cursor" x="8" y="3" width="8" height="12"/></svg></button>
    <button aria-label="按面选择图元"><svg viewBox="0 0 16 16"><path d="M1 4l8-3v11l-8 3z" fill="#c4e3f6" stroke="#286aa0" stroke-width="1.300"/><use href="#redx" x="8" y="0" width="8" height="8"/><use href="#cursor" x="7" y="4" width="8" height="12"/></svg></button>
  </div>
</footer>
</body>
</html>
```
FILE: styles.css
```css
* { box-sizing: border-box; }
html, body { height: 100%; }
body {
  margin: 0;
  display: flex;
  flex-direction: column;
  background: #d4d4d4;
  color: #222;
  font: 12px/16px "Noto Sans", "Noto Sans CJK SC", sans-serif;
  overflow: hidden;
}
button, input, select { font: inherit; color: inherit; margin: 0; }
button { background: none; border: 0; padding: 0; }
h1, h2, h3, h4, p, ul { margin: 0; padding: 0; font-size: 12px; font-weight: 400; }
svg { flex: none; display: block; }
.defs { position: absolute; }
.tri {
  display: inline-block;
  flex: none;
  width: 8px;
  height: 4px;
  background: #333;
  clip-path: polygon(0 0, 100% 0, 50% 100%);
}

/* Title bar */
.titlebar { display: flex; align-items: center; height: 31px; padding: 0 5px; flex: none; }
.quick { display: flex; align-items: center; }
.ib { width: 24px; height: 24px; display: flex; align-items: center; justify-content: center; flex: none; }
.ib.on { background: #b5d9f6; border: 1px solid #2b78b5; }
.ab { width: 12px; height: 24px; flex: none; display: flex; align-items: center; justify-content: center; }
.ab::before { content: ""; width: 5px; height: 3px; background: #444; clip-path: polygon(0 0, 100% 0, 50% 100%); }
.ab.right::before { width: 5px; height: 8px; clip-path: polygon(0 0, 100% 50%, 0 100%); }
.ab.custom::before { width: 9px; height: 7px; clip-path: polygon(0 0, 100% 0, 100% 15%, 0 15%, 0 35%, 100% 35%, 50% 100%, 0 35%); }
.ab.account { margin-right: 4px; }
.gap4 { width: 4px; }
.vsep { width: 7px; height: 22px; flex: none; background: linear-gradient(#bcbcbc, #bcbcbc) center / 1px 100% no-repeat; }
.doc { flex: 1; text-align: center; color: #333; white-space: nowrap; padding-bottom: 2px; }
.search { width: 180px; height: 23px; border: 1px solid #111; background: #fff; padding: 0 3px; margin-left: 1px; }
.search::placeholder { color: #555; font-style: italic; opacity: 1; }
.login { display: flex; align-items: center; gap: 3px; width: 110px; padding-left: 3px; }
.winbtns { display: flex; margin-left: 16px; }

/* Tabs */
.tabs { display: flex; height: 21px; padding-left: 5px; flex: none; color: #333; }
.tabs button { padding: 0 10px; line-height: 22px; height: 21px; }
.tabs .file { padding: 0 1px; color: #fff; }
.tabs .active { background: #f5f5f5; color: #111; }
.tabs .mini { padding: 0 20px; display: flex; align-items: center; }

/* Ribbon */
.ribbon { display: flex; margin: 0 5px; background: #f5f5f5; border-bottom: 1px solid #d2d2d2; flex: none; color: #333; }
.grp { display: flex; flex-direction: column; border-right: 1px solid #dcdcdc; padding-top: 4px; }
.grp:last-child { flex: 1; border-right: 0; }
.grp h2 { text-align: center; line-height: 20px; height: 20px; white-space: nowrap; }
.grp h2 .tri { margin-left: 3px; margin-bottom: 2px; }
.tools { display: flex; height: 72px; }
.tool { display: flex; flex-direction: column; align-items: center; padding-top: 2px; line-height: 17px; white-space: nowrap; flex: none; }
.tool span { padding-top: 3px; }
.tool .tri { width: 5px; height: 3px; margin-top: 3px; }
.tool.s { width: 38px; }
.tool.m { width: 41px; }
.tool.l { width: 44px; }
.tool.xl { width: 68px; }
.tool.side { display: grid; grid-template-columns: 5px 1fr 5px; justify-items: center; align-content: start; }
.tool.side svg, .tool.side span { grid-column: 1 / -1; grid-row: auto; }
.tool.side .tri { grid-column: 3; margin-top: -18px; }
.tool.sel { width: 38px; height: 72px; background: linear-gradient(#c4def5, #a9d1f4); border: 1px solid #2b6ca3; margin-left: 6px; padding-top: 1px; }
.g-select { width: 50px; }
.g-build { padding-left: 1px; padding-right: 1px; }
.g-stair { width: 152px; padding-left: 4px; }
.g-model { width: 125px; padding-left: 3px; }
.g-room { width: 203px; }
.g-room .tools { padding-left: 7px; gap: 6px; }
.g-room .stack { width: 92px; }
.g-open { width: 148px; padding-left: 2px; }
.g-datum { width: 61px; padding-left: 7px; padding-right: 7px; }
.g-plane { padding-left: 2px; padding-right: 12px; }
.stack { display: flex; flex-direction: column; padding-left: 6px; }
.g-room .stack, .g-datum .stack { padding-left: 0; }
.stack.mid { padding-top: 12px; }
.stack button { display: flex; align-items: center; gap: 4px; height: 24px; white-space: nowrap; }
.stack button span + span { margin-left: 4px; }
.g-plane .stack button { gap: 2px; }
.g-plane .stack button span + span { margin-left: 2px; }
.stack .tri { width: 5px; height: 3px; margin-left: 2px; }
.stack button:disabled { color: #a3a3a3; }
.options { height: 24px; background: #f5f5f5; margin: 0 5px; flex: none; }

/* Work area */
.work { flex: 1; min-height: 0; display: flex; margin: 0 5px; background: #f0f0f0; border-bottom: 1px solid #888; }
.docks { width: 218px; display: flex; flex-direction: column; gap: 3px; flex: none; margin-right: 5px; }
.dock { display: flex; flex-direction: column; min-height: 0; }
.dock > header { display: flex; justify-content: space-between; align-items: center; height: 18px; background: #c0ccda; padding: 0 4px 0 3px; color: #45505e; flex: none; }
.dock > header button { width: 12px; color: #000; font: 700 12px/16px "DejaVu Sans", sans-serif; }
.frame { margin-top: 2px; border: 1px solid #e2e2e2; border-top: 2px solid #777; border-left: 1px solid #777; }
.props { height: 299px; flex: none; }
.props .frame { flex: 1; min-height: 0; display: flex; flex-direction: column; }
.type { display: flex; align-items: center; height: 71px; padding: 2px; gap: 4px; border-bottom: 1px solid #ccc; color: #333; }
.type .tri { margin-left: auto; }
.thumb-box { width: 67px; height: 67px; border: 1px solid #d2d2d2; display: flex; align-items: center; justify-content: center; }
.pick { display: flex; align-items: center; gap: 6px; height: 27px; flex: none; }
.combo { position: relative; display: flex; }
.combo select { appearance: none; width: 100%; border: 0; border-radius: 0; opacity: 1; }
.combo .tri { position: absolute; right: 4px; top: 9px; pointer-events: none; }
.xp { width: 133px; height: 24px; }
.xp select { border: 1px solid #777; border-radius: 2px; background: linear-gradient(#f4f4f4, #d6d6d6); padding: 0 3px; color: #111; }
.edit-type { display: flex; align-items: center; gap: 3px; white-space: nowrap; color: #111; }
.scroller { display: flex; min-height: 0; }
.props .scroller { flex: 1; }
.grid { flex: 1; background: #fff; overflow: hidden; }
.grid h4 { display: flex; justify-content: space-between; align-items: center; background: #dadada; height: 19px; padding: 0 6px 0 2px; }
.grid table { width: 100%; border-collapse: collapse; table-layout: fixed; color: #111; }
.grid tr { height: 20px; }
.grid th { width: 94px; text-align: left; font-weight: 400; padding: 0 0 0 9px; white-space: nowrap; }
.grid td { padding: 0 0 0 2px; white-space: nowrap; }
.grid td:nth-child(2) { width: 93px; }
.grid th, .grid td { border-bottom: 1px dotted #999; border-right: 1px dotted #999; line-height: 16px; }
.grid .off { color: #777; }
.grid input { display: block; width: 92px; height: 19px; border: 1px solid #000; padding: 0 5px; margin-left: -2px; background: #fff; }
.grid td button { display: block; width: 90px; height: 18px; line-height: 14px; border: 1px solid #666; border-radius: 3px; background: linear-gradient(#f5f5f5, #cfcfcf); box-shadow: 0 1px 0 #888; }
.props footer { display: flex; justify-content: space-between; align-items: center; height: 24px; padding: 0 2px; flex: none; }
.props footer a { color: #0f62a8; }
.props footer button { width: 73px; height: 19px; border: 1px solid #b0b0b0; border-radius: 2px; color: #888; background: #f4f4f4; line-height: 16px; }

/* Scroll bars */
.vscroll { width: 16px; background: #f0f0f0; display: flex; flex-direction: column; align-items: center; flex: none; }
.vscroll i, .hscroll i { flex: none; width: 17px; height: 17px; display: flex; align-items: center; justify-content: center; }
.vscroll i::before, .hscroll i::before { content: ""; width: 7px; height: 4px; background: #333; }
.up::before { clip-path: polygon(50% 0, 100% 100%, 0 100%); }
.down::before { clip-path: polygon(0 0, 100% 0, 50% 100%); }
.hscroll .left::before { width: 4px; height: 7px; clip-path: polygon(100% 0, 100% 100%, 0 50%); }
.hscroll .rt::before { width: 4px; height: 7px; clip-path: polygon(0 0, 100% 50%, 0 100%); }
.vscroll .down { margin-top: auto; }
.vscroll b, .hscroll b { flex: none; width: 15px; border: 1px solid #999; border-radius: 1px; background: linear-gradient(90deg, #fafafa, #c8c8c8); display: flex; align-items: center; justify-content: center; }
.t-small { height: 23px; }
.t-tall { height: 118px; }
.t-small::before, .t-tall::before { content: ""; width: 7px; height: 8px; background: repeating-linear-gradient(#555 0 1px, transparent 1px 3px); }
.t-sq { height: 15px; }
s { flex: 1; }

/* Project browser */
.browser { flex: 1; }
.browser .frame { flex: 1; background: #fff; }
.tree { flex: 1; list-style: none; overflow: hidden; color: #111; }
.tree li { display: flex; align-items: center; height: 20px; white-space: nowrap; }
.tree span { padding: 1px 3px 1px 2px; margin-left: 3px; }
.tree .cur { background: #e0e0e0; }
.c { position: relative; width: 20px; height: 20px; flex: none; }
.c::before { content: ""; position: absolute; left: 8px; top: 0; height: 20px; border-left: 1px dotted #999; }
.c.first::before { top: 10px; height: 10px; }
.c.last::before { height: 10px; }
.c.h::after, .c:has(button)::after { content: ""; position: absolute; left: 9px; top: 10px; width: 14px; border-top: 1px dotted #999; }
.c button { position: absolute; z-index: 1; left: 4px; top: 6px; width: 9px; height: 9px; border: 1px solid #8a95a5; background: linear-gradient(#223f70, #223f70) center / 5px 1px no-repeat, #fff; }
.c .plus { background: linear-gradient(#223f70, #223f70) center / 5px 1px no-repeat, linear-gradient(#223f70, #223f70) center / 1px 5px no-repeat, #fff; }

/* Drawing view */
.view { position: relative; flex: 1; min-width: 0; display: grid; grid-template-columns: 1fr 17px; grid-template-rows: 1fr 18px; border-left: 2px solid #777; border-top: 1px solid #777; }
.canvas { position: relative; background: #fff; min-height: 0; overflow: hidden; }
.scene { width: 100%; height: 100%; }
.cube { font: 300 17px "Noto Sans CJK SC", sans-serif; fill: #999; }
.side-scroll { width: 17px; }
.mdi { position: absolute; top: 8px; right: 4px; display: flex; gap: 6px; }
.navbar { position: absolute; right: 2px; top: 164px; width: 35px; padding: 1px 2px; display: flex; flex-direction: column; align-items: center; gap: 8px; border: 2px solid #bdbdbd; border-radius: 5px; background: #f5f5f5; }
.navbar .tiny { align-self: flex-end; }
.navbar .tri { width: 5px; height: 3px; background: #777; }
.navbar hr { width: 25px; margin: 0; border: 0; border-top: 1px solid #bbb; }
.viewbar { display: flex; background: #eee; min-width: 0; }
.viewbar > button { width: 21px; display: flex; align-items: center; justify-content: center; flex: none; }
.viewbar > button svg { width: 16px; height: 16px; }
.viewbar > .scale { width: 76px; gap: 8px; padding-left: 8px; color: #000; font-family: "Liberation Sans", sans-serif; }
.hscroll { flex: 1; display: flex; align-items: center; }
.corner { background: #e8e8e8; }
.mark { position: absolute; right: 62px; bottom: -2px; pointer-events: none; }
.wm { font-family: "Liberation Sans", sans-serif; font-weight: 700; fill: #fff; stroke: #d8d8d8; stroke-width: 3px; paint-order: stroke; }
.wm.zh { font-family: "Noto Sans CJK SC", sans-serif; }
.wm.url { font-family: "Noto Sans", sans-serif; font-weight: 400; fill: #fcfcfc; stroke-width: 2px; }

/* Status bar */
.status { height: 29px; flex: none; display: flex; align-items: center; padding: 0 23px 0 5px; color: #111; }
.status p { width: 483px; white-space: nowrap; overflow: hidden; flex: none; }
.si { width: 16px; height: 16px; margin-left: 8px; }
.last-si { margin-left: 10px; }
.flat { width: 205px; height: 20px; margin-left: 8px; }
.flat select { background: #fafafa; color: #777; padding: 0; }
.flat .tri { background: #999; right: 3px; top: 8px; }
.count { margin-left: 6px; width: 22px; }
.selset { display: flex; gap: 10px; margin-left: auto; }
.selset svg { width: 16px; height: 16px; }
```
